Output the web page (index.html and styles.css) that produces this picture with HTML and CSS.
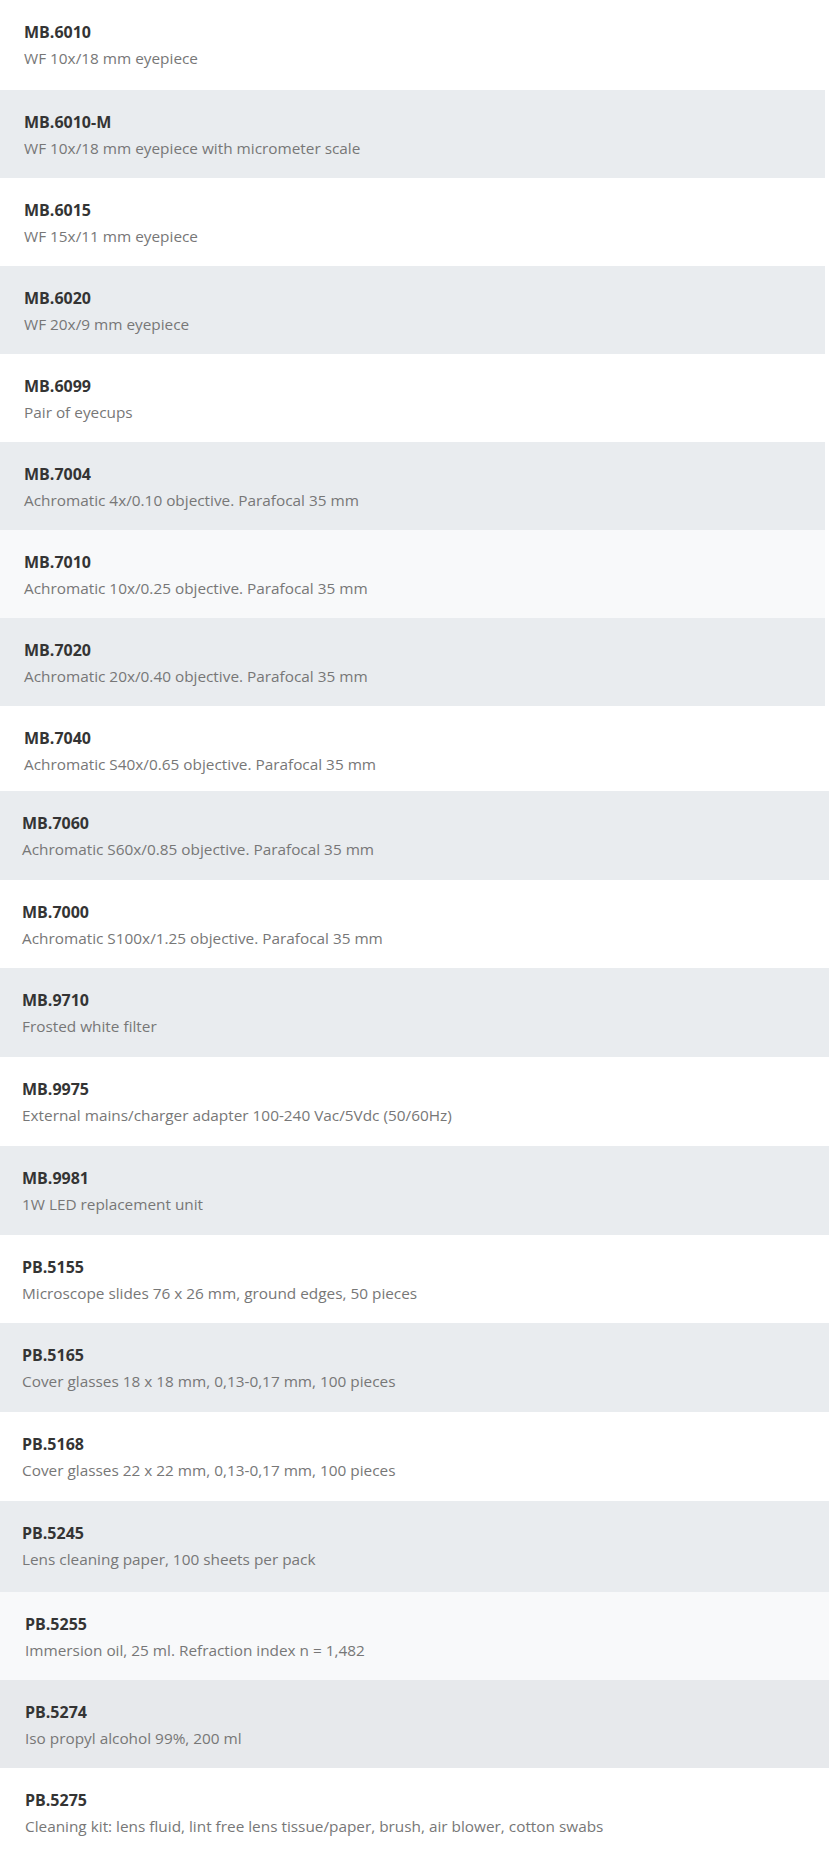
FILE: index.html
```html
<!DOCTYPE html>
<html lang="en">
<head>
<meta charset="utf-8">
<title>Accessories</title>
<link rel="stylesheet" href="styles.css">
</head>
<body>
<main class="list">
  <section class="group group-a">
    <div class="row row-tall"><div class="code">MB.6010</div><div class="desc">WF 10x/18 mm eyepiece</div></div>
    <div class="row alt"><div class="code">MB.6010-M</div><div class="desc">WF 10x/18 mm eyepiece with micrometer scale</div></div>
    <div class="row"><div class="code">MB.6015</div><div class="desc">WF 15x/11 mm eyepiece</div></div>
    <div class="row alt"><div class="code">MB.6020</div><div class="desc">WF 20x/9 mm eyepiece</div></div>
    <div class="row"><div class="code">MB.6099</div><div class="desc">Pair of eyecups</div></div>
    <div class="row alt"><div class="code">MB.7004</div><div class="desc">Achromatic 4x/0.10 objective. Parafocal 35 mm</div></div>
    <div class="row light"><div class="code">MB.7010</div><div class="desc">Achromatic 10x/0.25 objective. Parafocal 35 mm</div></div>
    <div class="row alt"><div class="code">MB.7020</div><div class="desc">Achromatic 20x/0.40 objective. Parafocal 35 mm</div></div>
    <div class="row row-short"><div class="code">MB.7040</div><div class="desc">Achromatic S40x/0.65 objective. Parafocal 35 mm</div></div>
  </section>
  <section class="group group-b">
    <div class="row alt"><div class="code">MB.7060</div><div class="desc">Achromatic S60x/0.85 objective. Parafocal 35 mm</div></div>
    <div class="row row-88"><div class="code">MB.7000</div><div class="desc">Achromatic S100x/1.25 objective. Parafocal 35 mm</div></div>
    <div class="row alt"><div class="code">MB.9710</div><div class="desc">Frosted white filter</div></div>
    <div class="row"><div class="code">MB.9975</div><div class="desc">External mains/charger adapter 100-240 Vac/5Vdc (50/60Hz)</div></div>
    <div class="row alt"><div class="code">MB.9981</div><div class="desc">1W LED replacement unit</div></div>
    <div class="row row-88"><div class="code">PB.5155</div><div class="desc">Microscope slides 76 x 26 mm, ground edges, 50 pieces</div></div>
    <div class="row alt"><div class="code">PB.5165</div><div class="desc">Cover glasses 18 x 18 mm, 0,13-0,17 mm, 100 pieces</div></div>
    <div class="row"><div class="code">PB.5168</div><div class="desc">Cover glasses 22 x 22 mm, 0,13-0,17 mm, 100 pieces</div></div>
    <div class="row alt row-91"><div class="code">PB.5245</div><div class="desc">Lens cleaning paper, 100 sheets per pack</div></div>
  </section>
  <section class="group group-c">
    <div class="row light"><div class="code">PB.5255</div><div class="desc">Immersion oil, 25 ml. Refraction index n = 1,482</div></div>
    <div class="row alt alt-2"><div class="code">PB.5274</div><div class="desc">Iso propyl alcohol 99%, 200 ml</div></div>
    <div class="row row-last"><div class="code">PB.5275</div><div class="desc">Cleaning kit: lens fluid, lint free lens tissue/paper, brush, air blower, cotton swabs</div></div>
  </section>
</main>
</body>
</html>
```

FILE: styles.css
```css
* {
  box-sizing: border-box;
}

html, body {
  margin: 0;
  padding: 0;
  background: #ffffff;
}

body {
  font-family: "Open Sans", "Liberation Sans", sans-serif;
  font-size: 15.35px;
  line-height: 26px;
  color: #777777;
}

.list {
  display: flex;
  flex-direction: column;
  width: 830px;
}

.group {
  display: flex;
  flex-direction: column;
}

.group-a {
  width: 825px;
}

.group-b,
.group-c {
  width: 829px;
}

.row {
  height: 88px;
  padding-top: 19px;
  background: #ffffff;
}

.group-a .row {
  padding-left: 24px;
}

.group-b .row {
  height: 89px;
  padding-left: 22px;
}

.group-c .row {
  padding-left: 25px;
}

.row.alt {
  background: #e9ecef;
}

.row.alt-2 {
  background: #e7e9ec;
}

.row.light {
  background: #f8f9fa;
}

.row.row-tall {
  height: 90px;
}

.row.row-short {
  height: 85px;
}

.group-b .row.row-88 {
  height: 88px;
}

.group-b .row.row-91 {
  height: 91px;
}

.group-c .row.row-last {
  height: 95px;
}

.code {
  font-size: 16px;
  font-weight: 700;
  color: #343434;
}

.desc {
  color: #777777;
}
```
